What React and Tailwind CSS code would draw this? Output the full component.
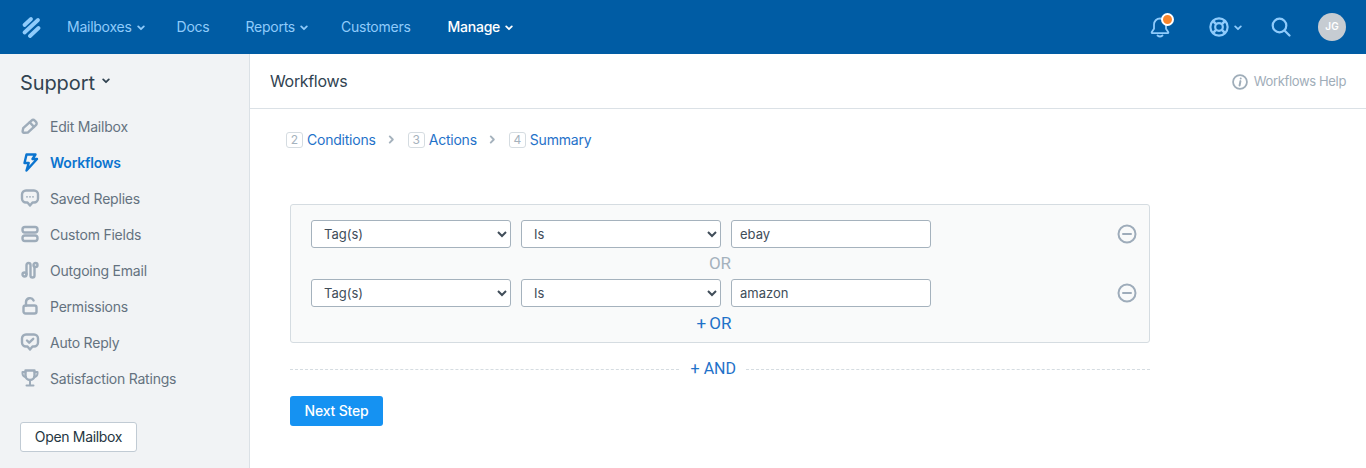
import React from "react";

const Chev = ({ className = "" }) => (
  <svg viewBox="0 0 10 7" className={className} fill="none" stroke="currentColor" strokeWidth="2.2" strokeLinecap="round" strokeLinejoin="round">
    <path d="M1.5 1.5 5 5l3.5-3.5" />
  </svg>
);

const NavItem = ({ label, chev, active, className = "" }) => (
  <div className={`flex items-center text-[14px] tracking-[-0.25px] ${active ? "text-white font-medium" : "text-[#8fcbfb]"} ${className}`}>
    <span>{label}</span>
    {chev && <Chev className="w-[8px] h-[6px] ml-[5px] mt-[2px]" />}
  </div>
);

const S = ({ children, active }) => (
  <svg viewBox="0 0 20 20" className={`w-[20px] h-[20px] ${active ? "text-[#0b74cf]" : "text-[#9eacba]"}`} fill="none" stroke="currentColor" strokeWidth="2.4" strokeLinecap="round" strokeLinejoin="round">
    {children}
  </svg>
);

const bubble = "M6 2.500h8A4 4 0 0 1 18 6.500v4A4 4 0 0 1 14 14.500h-1.500L10 17.500l-2.500-3H6a4 4 0 0 1-4-4v-4A4 4 0 0 1 6 2.500z";

const items = [
  ["Edit Mailbox", <><path d="M3.200 12.200 11.500 4.600a2.400 2.400 0 0 1 3.300 0l1.200 1.200a2.400 2.400 0 0 1-.1 3.400L7.800 16.600 4 16.800a1.300 1.300 0 0 1-1.400-1.400z" /><path d="m9.700 6.300 4.300 4.600" /></>],
  ["Workflows", <path d="M6.500 2.500h9l-3 4.500h4.500L6.500 18.500l2.200-7.500H4.500z" />],
  ["Saved Replies", <><path d={bubble} /><path d="M7 8.800h.01M10 8.800h.01M13 8.800h.01" strokeWidth="1.800" /></>],
  ["Custom Fields", <><rect x="2.500" y="3" width="15" height="5.500" rx="2.500" /><rect x="2.500" y="11.500" width="15" height="5.500" rx="2.500" /></>],
  ["Outgoing Email", <><circle cx="4.500" cy="14.500" r="2" /><circle cx="15.500" cy="5" r="2" /><path d="M6.500 14V5a2 2 0 0 1 4 0v10.500a2 2 0 0 0 4 0V7" /></>],
  ["Permissions", <><rect x="3.500" y="9.500" width="13" height="8" rx="2" /><path d="M6 9.500V6a4 4 0 0 1 7.600-1.600" /></>],
  ["Auto Reply", <><path d={bubble} /><path d="m7 8.500 2.200 2.200L13.200 6.800" /></>],
  ["Satisfaction Ratings", <><path d="M5.500 2.500h9v5a4.500 4.500 0 0 1-9 0z" /><path d="M5.500 4H2.500v1.500A3.500 3.500 0 0 0 6 9M14.500 4h3v1.500A3.500 3.500 0 0 1 14 9M10 12v5M6.500 17.500h7" strokeWidth="2" /></>],
];

const Step = ({ n, label }) => (
  <div className="flex items-center">
    <span className="w-[17px] h-[16px] flex items-center justify-center border border-[#d5dce1] rounded-[3px] text-[12px] text-[#a5b2bd] mr-[4px]">{n}</span>
    <span className="text-[14px] tracking-[-0.22px] text-[#1f72c9]">{label}</span>
  </div>
);

const Sep = () => (
  <svg viewBox="0 0 8 10" className="w-[7px] h-[9px] mx-[12.5px] text-[#a5b2bd]" fill="none" stroke="currentColor" strokeWidth="2.200" strokeLinecap="round" strokeLinejoin="round">
    <path d="m2 1.500 3.500 3.500L2 8.500" />
  </svg>
);

const Minus = () => (
  <svg viewBox="0 0 20 20" className="w-[20px] h-[20px] text-[#9eacba]" fill="none" stroke="currentColor" strokeWidth="2" strokeLinecap="round">
    <circle cx="10" cy="10" r="8.500" />
    <path d="M6 10h8" />
  </svg>
);

const Row = ({ value }) => (
  <div className="flex items-center h-[28px]">
    <select defaultValue="Tag(s)" className="w-[200px] h-[28px] pl-[8px] bg-white border border-[#a5b2bd] rounded-[3px] text-[13px] text-[#404d59]">
      <option>Tag(s)</option>
    </select>
    <select defaultValue="Is" className="w-[200px] h-[28px] ml-[10px] pl-[8px] bg-white border border-[#a5b2bd] rounded-[3px] text-[13px] text-[#404d59]">
      <option>Is</option>
    </select>
    <input readOnly value={value} className="w-[200px] h-[28px] ml-[10px] px-[8px] bg-white border border-[#a5b2bd] rounded-[3px] text-[13px] text-[#404d59]" />
    <div className="ml-auto mr-[12px]"><Minus /></div>
  </div>
);

export default function App() {
  return (
    <div className="h-screen overflow-hidden flex flex-col bg-white font-['Inter','Liberation_Sans',sans-serif]">
      <header className="h-[54px] shrink-0 bg-[#005ca4] flex items-center pb-[1px]">
        <svg viewBox="0 0 20 22" className="w-[20px] h-[22px] ml-[21px] text-[#8fcbfb]" fill="none" stroke="currentColor" strokeWidth="3.800" strokeLinecap="round">
          <path d="M3.500 9 10 3" />
          <path d="M3.500 16.500 17 4" />
          <path d="M9 20 17.500 12" />
        </svg>
        <nav className="flex items-center ml-[26px]">
          <NavItem label="Mailboxes" chev />
          <NavItem label="Docs" className="ml-[32px]" />
          <NavItem label="Reports" chev className="ml-[36px]" />
          <NavItem label="Customers" className="ml-[33px]" />
          <NavItem label="Manage" chev active className="ml-[37px]" />
        </nav>
        <div className="ml-auto flex items-center text-[#8fcbfb]">
          <div className="relative w-[20px] h-[22px]">
            <svg viewBox="0 0 20 22" className="w-[20px] h-[22px]" fill="none" stroke="currentColor" strokeWidth="1.800" strokeLinecap="round" strokeLinejoin="round">
              <path d="M10 2.500a6 6 0 0 0-6 6v4.200L1.800 16c-.3.600 0 1.200.7 1.200h15c.7 0 1-.6.7-1.200L16 12.700V8.500a6 6 0 0 0-6-6zM7.500 19.500c1.300 1 3.700 1 5 0" />
            </svg>
            <span className="absolute right-[-4px] top-[-3px] w-[13px] h-[13px] rounded-full bg-[#f8852c] border-2 border-white" />
          </div>
          <svg viewBox="0 0 22 22" className="w-[20px] h-[20px] ml-[39px]" fill="none" stroke="currentColor" strokeWidth="2.400">
            <circle cx="11" cy="11" r="9.500" />
            <circle cx="11" cy="11" r="4.200" />
            <path d="m4.500 4.500 3.600 3.600M17.500 4.500l-3.600 3.600M4.500 17.500l3.600-3.600M17.500 17.500l-3.600-3.600" strokeWidth="2.800" />
          </svg>
          <Chev className="w-[8px] h-[6px] ml-[5px] mt-[2px]" />
          <svg viewBox="0 0 20 20" className="w-[20px] h-[20px] ml-[29px]" fill="none" stroke="currentColor" strokeWidth="2.200" strokeLinecap="round">
            <circle cx="8.500" cy="8.500" r="6.800" />
            <path d="m13.500 13.500 5 5" />
          </svg>
          <div className="w-[28px] h-[28px] ml-[27px] mr-[20px] rounded-full bg-[#c6ccd2] text-white text-[10px] font-semibold flex items-center justify-center">JG</div>
        </div>
      </header>
      <div className="flex-1 flex min-h-0">
        <aside className="w-[250px] shrink-0 bg-[#f1f3f5] border-r border-[#dbe1e6] pl-[20px] pt-[16px]">
          <div className="flex items-center h-[26px] text-[20px] tracking-[-0.1px] text-[#314351]">
            <span>Support</span>
            <Chev className="w-[8px] h-[6px] ml-[7px] mb-[4px]" />
          </div>
          <ul className="mt-[12px]">
            {items.map(([label, icon]) => {
              const active = label === "Workflows";
              return (
                <li key={label} className="flex items-center h-[36px]">
                  <S active={active}>{icon}</S>
                  <span className={`ml-[10px] text-[14px] tracking-[-0.22px] ${active ? "text-[#0b74cf] font-semibold" : "text-[#64727f]"}`}>{label}</span>
                </li>
              );
            })}
          </ul>
          <button className="mt-[26px] w-[117px] h-[30px] pb-[1px] bg-white border border-[#c1cbd4] rounded-[3px] text-[14px] tracking-[-0.33px] text-[#253642]">Open Mailbox</button>
        </aside>
        <main className="flex-1 min-w-0">
          <div className="h-[55px] border-b border-[#dbe1e6] flex items-center pl-[20px] pr-[20px]">
            <h1 className="text-[16px] tracking-[-0.33px] text-[#314351]">Workflows</h1>
            <div className="ml-auto flex items-center text-[13px] tracking-[-0.35px] text-[#9fadb9] pt-[1px]">
              <svg viewBox="0 0 18 18" className="w-[16px] h-[16px] mr-[6px]" fill="none" stroke="currentColor" strokeWidth="2">
                <circle cx="9" cy="9" r="7.800" />
                <path d="M9.500 8 8.500 13M9.800 5h.01" strokeWidth="2.200" strokeLinecap="round" />
              </svg>
              Workflows Help
            </div>
          </div>
          <div className="pl-[36px] pt-[22px] flex items-center h-[39px]">
            <Step n="2" label="Conditions" />
            <Sep />
            <Step n="3" label="Actions" />
            <Sep />
            <Step n="4" label="Summary" />
          </div>
          <div className="ml-[40px] w-[860px] mt-[56px]">
            <div className="h-[139px] bg-[#f9fafa] border border-[#d5dce1] rounded-[3px] pl-[20px] pt-[15px]">
              <Row value="ebay" />
              <div className="h-[31px] w-[818px] flex items-center justify-center font-['Roboto',sans-serif] text-[17px] text-[#a5b2bd]">OR</div>
              <Row value="amazon" />
              <div className="h-[33px] w-[806px] pt-[1px] flex items-center justify-center font-['Roboto',sans-serif] text-[17px] [word-spacing:-1px] text-[#1f72c9]">+ OR</div>
            </div>
            <div className="flex items-center mt-[16px] h-[20px]">
              <div className="flex-1 border-t border-dashed border-[#d5dce1]" />
              <span className="ml-[12px] mr-[10px] font-['Roboto',sans-serif] text-[16px] text-[#1f72c9]">+ AND</span>
              <div className="w-[404px] border-t border-dashed border-[#d5dce1]" />
            </div>
            <button className="mt-[17px] w-[93px] h-[30px] pb-[1px] bg-[#1592f2] rounded-[3px] text-white text-[14px] tracking-[-0.2px] font-medium">Next Step</button>
          </div>
        </main>
      </div>
    </div>
  );
}
